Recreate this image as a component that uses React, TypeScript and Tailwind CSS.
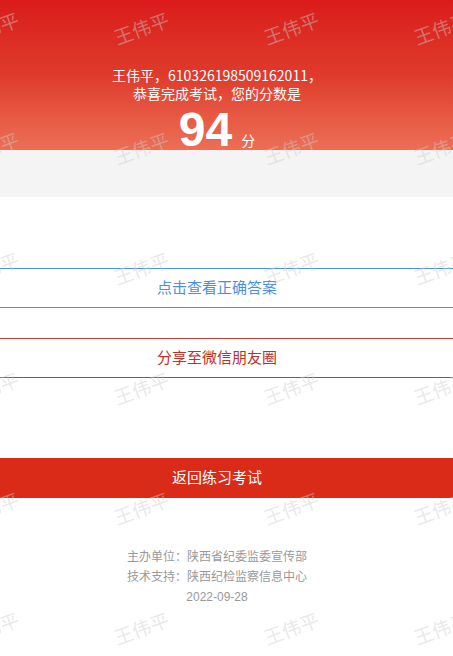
import React from "react";

const marks: { x: number; y: number }[] = [];
for (let r = 0; r < 6; r++) {
  for (let c = 0; c < 4; c++) {
    marks.push({ x: -8 + c * 150, y: 30 + r * 120 });
  }
}

export default function App() {
  return (
    <div
      className="relative w-full h-[656px] overflow-hidden bg-white"
      style={{ fontFamily: '"Liberation Sans", "Noto Sans CJK SC", sans-serif' }}
    >
      {/* header with score */}
      <div className="h-[150px] overflow-hidden bg-gradient-to-b from-[#da1a1a] via-[#df3a2c] to-[#ec6e55] pr-[19px] text-white text-center">
        <div
          className="pt-[66px] text-[14px] leading-[18px]"
          style={{ fontFamily: '"Noto Sans CJK SC", sans-serif' }}
        >
          <p>王伟平，610326198509162011，</p>
          <p>恭喜完成考试，您的分数是</p>
        </div>
        <div className="mt-[6px] flex items-baseline justify-center">
          <span className="text-[48px] leading-[44px] font-bold">94</span>
          <span className="ml-[9px] text-[14px]">分</span>
        </div>
      </div>
      <div className="h-[47px] bg-[#f4f4f4]" />

      <div className="mt-[71px] h-[40px] border-y border-[#4a90e2] pr-[19px] flex items-center justify-center text-[15px] text-[#4a8fe0]">
        点击查看正确答案
      </div>
      <div className="mt-[30px] h-[40px] border-y border-[#c43a32] pr-[19px] flex items-center justify-center text-[15px] text-[#c0302b]">
        分享至微信朋友圈
      </div>
      <div className="mt-[80px] h-[40px] bg-[#d92b18] pr-[19px] flex items-center justify-center text-[15px] text-white">
        返回练习考试
      </div>

      <div className="mt-[49px] pr-[19px] text-center text-[12px] leading-[20px] text-[#999]">
        <p>主办单位：陕西省纪委监委宣传部</p>
        <p>技术支持：陕西纪检监察信息中心</p>
        <p>2022-09-28</p>
      </div>

      {/* watermark */}
      <div className="pointer-events-none absolute inset-0">
        {marks.map((m, i) => (
          <span
            key={i}
            className="absolute -translate-x-1/2 -translate-y-1/2 -rotate-[20deg] whitespace-nowrap text-[19px] text-[rgba(205,205,205,0.45)]"
            style={{ left: m.x, top: m.y }}
          >
            王伟平
          </span>
        ))}
      </div>
    </div>
  );
}
